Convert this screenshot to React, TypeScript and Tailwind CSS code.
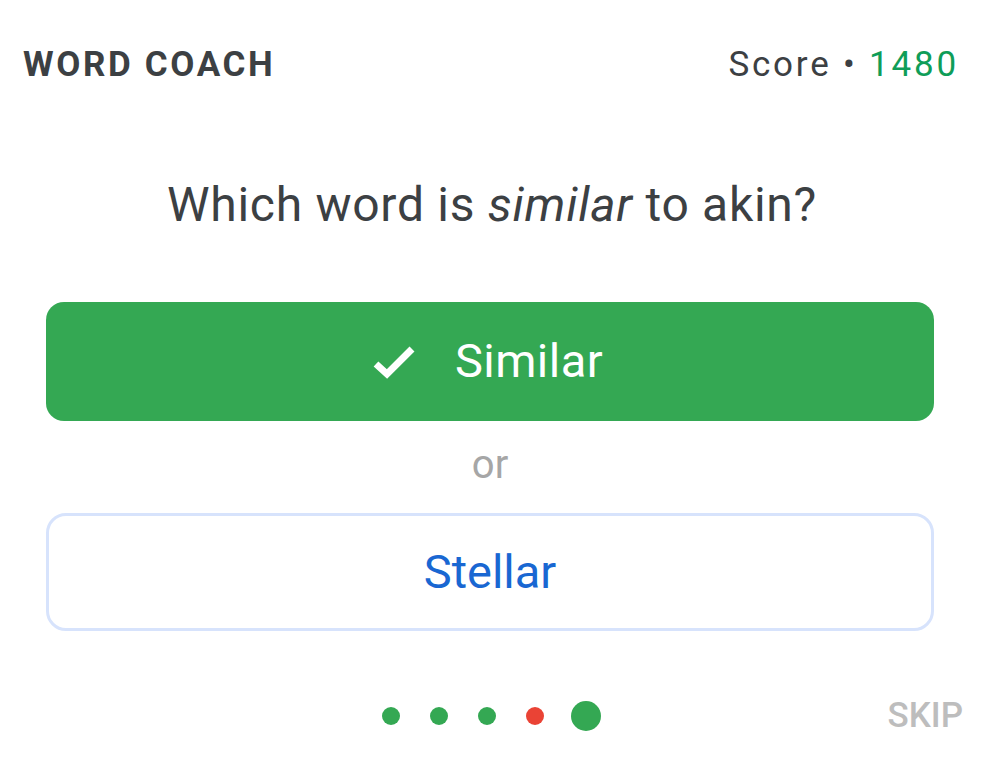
const font = { fontFamily: 'Roboto, "Noto Sans", sans-serif' }

function Dot({ color, big }: { color: string; big?: boolean }) {
  return <span className={`${big ? '-ml-[3px] h-[30px] w-[30px]' : 'h-[18px] w-[18px]'} ${color} block rounded-full`} />
}

export default function App() {
  return (
    <div className="h-[776px] w-[984px] bg-white text-[#3c4043]" style={font}>
      <div className="flex items-center justify-between pl-[23px] pr-[25px] pt-[47px]">
        <span className="text-[35px] font-bold leading-[35px] tracking-[0.075em]">WORD COACH</span>
        <span className="text-[35px] leading-[35px] tracking-[0.08em]">
          Score • <span className="text-[#0f9d58]">1480</span>
        </span>
      </div>

      <div className="mt-[99px] text-center text-[48px] leading-[48px] tracking-[0.015em]">
        Which word is <i>similar</i> to akin?
      </div>

      <div className="ml-[46px] mr-[50px] mt-[73px] flex flex-col items-stretch">
        <button
          type="button"
          className="flex h-[119px] items-center justify-center gap-[39px] rounded-[18px] bg-[#34a853] pr-[5px] text-[47px] text-white"
        >
          <svg width="44" height="34" viewBox="0 0 44 34" fill="none">
            <path d="M4 19 L15 29 L40 4" stroke="white" strokeWidth="7" strokeLinecap="butt" strokeLinejoin="miter" />
          </svg>
          <span className="tracking-[0.01em]">Similar</span>
        </button>

        <div className="flex h-[92px] items-center justify-center pb-[5px] text-[40px] text-[#a6a6a6]">or</div>

        <button
          type="button"
          className="flex h-[118px] items-center justify-center rounded-[20px] border-[3px] border-[#d7e3fc] bg-white text-[47px] text-[#1967d2]"
        >
          Stellar
        </button>
      </div>

      <div className="relative mt-[70px] flex h-[30px] items-center justify-center">
        <div className="mr-[2px] flex items-center gap-[30px]">
          <Dot color="bg-[#34a853]" />
          <Dot color="bg-[#34a853]" />
          <Dot color="bg-[#34a853]" />
          <Dot color="bg-[#ea4335]" />
          <Dot color="bg-[#34a853]" big />
        </div>
        <span className="absolute right-[21px] top-1/2 -translate-y-1/2 text-[35px] font-medium text-[#bdbdbd]">SKIP</span>
      </div>
    </div>
  )
}
